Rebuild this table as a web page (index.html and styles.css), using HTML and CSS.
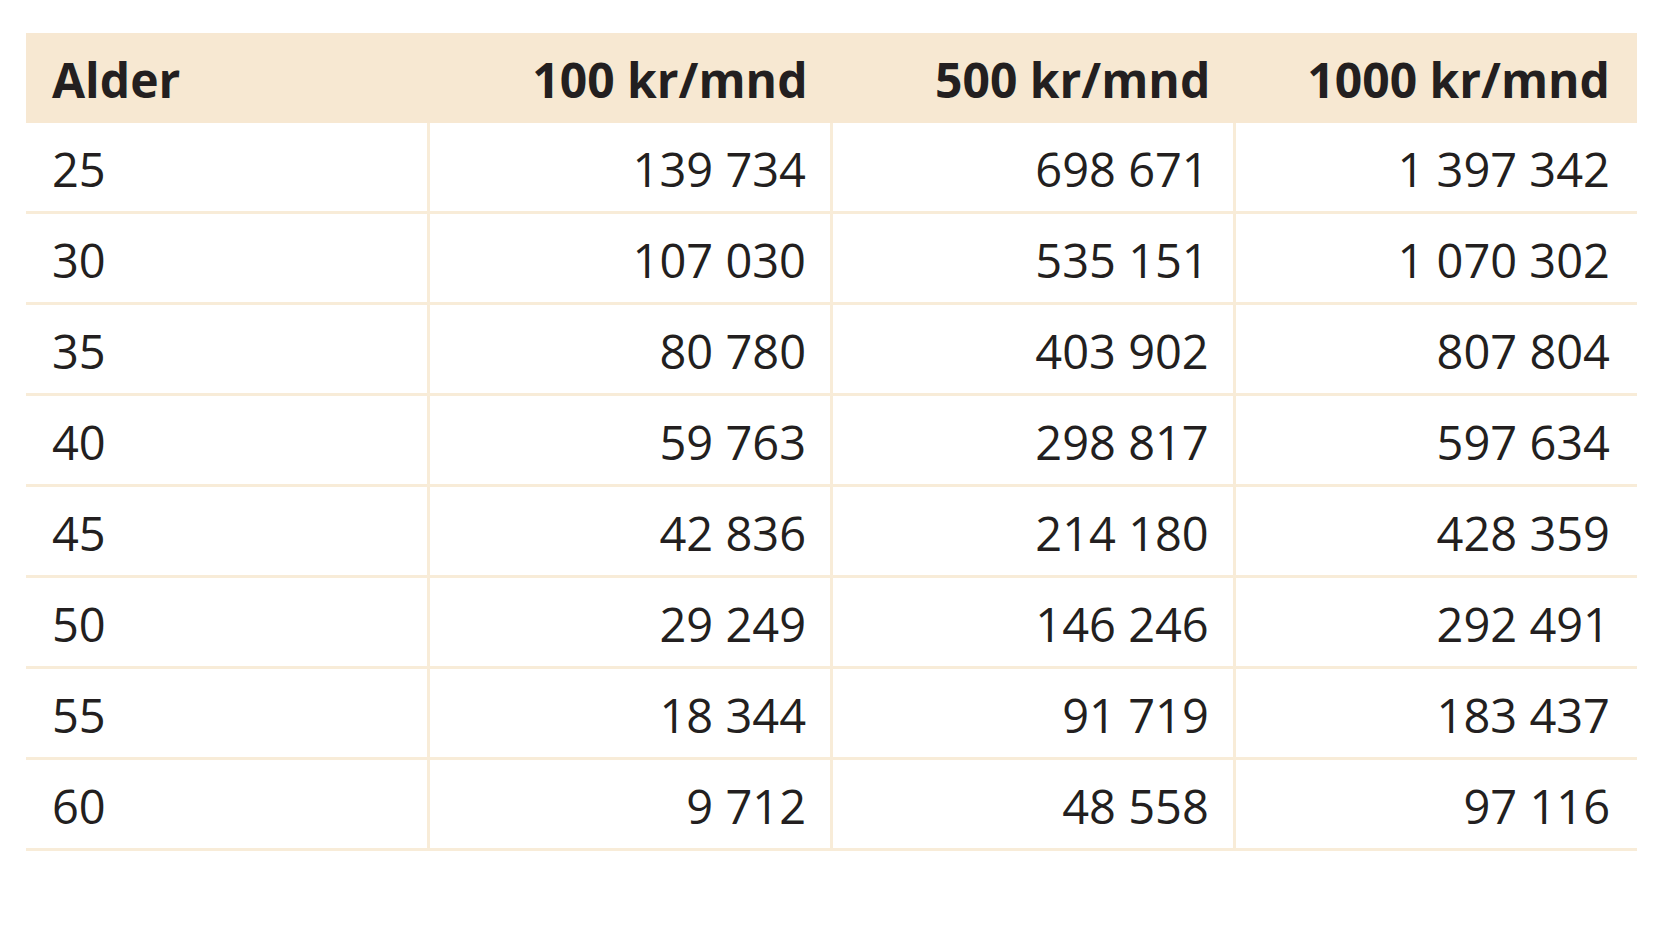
FILE: index.html
```html
<!DOCTYPE html>
<html lang="no">
<head>
<meta charset="utf-8">
<title>Sparing per måned</title>
<link rel="stylesheet" href="styles.css">
</head>
<body>
<table class="savings">
  <thead>
    <tr>
      <th class="age">Alder</th>
      <th>100 kr/mnd</th>
      <th>500 kr/mnd</th>
      <th>1000 kr/mnd</th>
    </tr>
  </thead>
  <tbody>
    <tr><td class="age">25</td><td>139 734</td><td>698 671</td><td>1 397 342</td></tr>
    <tr><td class="age">30</td><td>107 030</td><td>535 151</td><td>1 070 302</td></tr>
    <tr><td class="age">35</td><td>80 780</td><td>403 902</td><td>807 804</td></tr>
    <tr><td class="age">40</td><td>59 763</td><td>298 817</td><td>597 634</td></tr>
    <tr><td class="age">45</td><td>42 836</td><td>214 180</td><td>428 359</td></tr>
    <tr><td class="age">50</td><td>29 249</td><td>146 246</td><td>292 491</td></tr>
    <tr><td class="age">55</td><td>18 344</td><td>91 719</td><td>183 437</td></tr>
    <tr><td class="age">60</td><td>9 712</td><td>48 558</td><td>97 116</td></tr>
  </tbody>
</table>
</body>
</html>
```

FILE: styles.css
```css
html, body {
  margin: 0;
  padding: 0;
  background: #ffffff;
}

body {
  padding: 33px 30px 0 26px;
  font-family: "Open Sans", "Noto Sans", sans-serif;
  color: #231f20;
}

.savings {
  width: 1611px;
  border-collapse: collapse;
  table-layout: fixed;
}

.savings th,
.savings td {
  line-height: 1;
  text-align: right;
  padding: 4px 24px 0 26px;
  white-space: nowrap;
}

.savings th:last-child,
.savings td:last-child {
  padding-right: 27px;
}

.savings th {
  background: #f7e8d2;
  font-size: 48px;
  font-weight: 700;
  height: 86px;
}

.savings td {
  font-size: 47px;
  font-weight: 400;
  height: 84px;
  border-bottom: 3px solid #f8ecd8;
  border-left: 3px solid #f8ecd8;
}

.savings td:first-child {
  border-left: none;
}

.savings .age {
  text-align: left;
}
```
